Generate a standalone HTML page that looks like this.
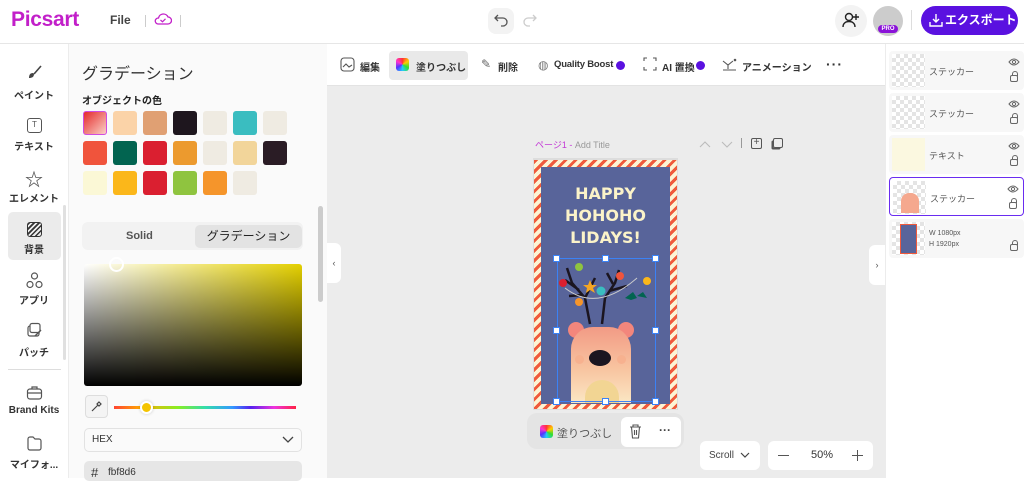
<!DOCTYPE html>
<html><head><meta charset="utf-8"><style>
*{box-sizing:border-box;margin:0;padding:0}
body{width:1024px;height:478px;overflow:hidden;background:#fff;font-family:"Liberation Sans","Noto Sans CJK JP",sans-serif;color:#222;position:relative}
.a{position:absolute}
.sw{position:absolute;width:24px;height:24px;border-radius:3px}
.rl{position:absolute;left:0;width:68px;text-align:center;font-size:10px;font-weight:bold;color:#333}
.ti{position:absolute;top:59px;font-size:10px;font-weight:bold;color:#333;white-space:nowrap}
.ly{position:absolute;left:889px;width:135px;height:39px;background:#f7f7f7;border-radius:4px}
.ck{position:absolute;left:3px;top:3px;width:33px;height:33px;background-color:#fff;background-image:linear-gradient(45deg,#e4e4e4 25%,transparent 25%,transparent 75%,#e4e4e4 75%),linear-gradient(45deg,#e4e4e4 25%,transparent 25%,transparent 75%,#e4e4e4 75%);background-size:8px 8px;background-position:0 0,4px 4px}
.lt{position:absolute;left:40px;top:14px;font-size:9px;color:#555}
.ey{position:absolute;right:4px;top:7px}
.lk{position:absolute;right:6px;top:24px;width:8px;height:7px;border:1.2px solid #666;border-radius:2px}
.lk:before{content:"";position:absolute;left:0.5px;top:-5px;width:4px;height:4px;border:1.2px solid #666;border-bottom:none;border-radius:3px 3px 0 0}
.hd{position:absolute;width:7px;height:7px;background:#fff;border:1.5px solid #3b82f6}
</style></head><body>
<div class="a" style="left:0;top:0;width:1024px;height:44px;border-bottom:1px solid #e6e6e6;background:#fff"></div>
<div class="a" style="left:11px;top:8px;font-size:21px;color:#c21fc9;font-weight:bold;letter-spacing:-0.3px">Picsart</div>
<div class="a" style="left:110px;top:13px;font-size:12px;color:#444;font-weight:bold">File</div>
<div class="a" style="left:145px;top:15px;width:1px;height:12px;background:#ccc"></div>
<svg class="a" style="left:154px;top:12px" width="18" height="14" viewBox="0 0 18 14"><path d="M4 12h10a3.5 3.5 0 0 0 0-7 5 5 0 0 0-9.5 1A3 3 0 0 0 4 12z" fill="none" stroke="#c21fc9" stroke-width="1.3"/><path d="M6.5 8l2 1.8 3-3" fill="none" stroke="#c21fc9" stroke-width="1.2"/></svg>
<div class="a" style="left:180px;top:15px;width:1px;height:12px;background:#ccc"></div>
<div class="a" style="left:488px;top:8px;width:26px;height:26px;border-radius:8px;background:#f3f3f3"></div>
<svg class="a" style="left:493px;top:13px" width="16" height="14" viewBox="0 0 16 14"><path d="M5 2L2 5l3 3M2 5h8a4 4 0 0 1 0 8H8" fill="none" stroke="#555" stroke-width="1.3"/></svg>
<svg class="a" style="left:522px;top:13px" width="16" height="14" viewBox="0 0 16 14"><path d="M11 2l3 3-3 3M14 5H6a4 4 0 0 0 0 8h2" fill="none" stroke="#ccc" stroke-width="1.3"/></svg>
<div class="a" style="left:835px;top:5px;width:32px;height:32px;border-radius:50%;background:#f3f3f3"></div>
<svg class="a" style="left:841px;top:11px" width="20" height="18" viewBox="0 0 20 18"><circle cx="8" cy="6" r="3.5" fill="none" stroke="#222" stroke-width="1.4"/><path d="M2 16c0-4 3-5.5 6-5.5s6 1.5 6 5.5" fill="none" stroke="#222" stroke-width="1.4"/><path d="M15 3v6M12 6h6" stroke="#222" stroke-width="1.4"/></svg>
<div class="a" style="left:873px;top:6px;width:30px;height:30px;border-radius:50%;background:#ccc"></div>
<div class="a" style="left:878px;top:25px;width:20px;height:8px;border-radius:4px;background:#8a12d8;color:#fff;font-size:6px;text-align:center;line-height:8px;font-weight:bold">PRO</div>
<div class="a" style="left:911px;top:10px;width:1px;height:20px;background:#ddd"></div>
<div class="a" style="left:921px;top:6px;width:97px;height:29px;border-radius:15px;background:#5a11e0;color:#fff;font-size:12px;font-weight:bold;line-height:29px;padding-left:24px">エクスポート</div>
<svg class="a" style="left:929px;top:13px" width="14" height="14" viewBox="0 0 14 14"><path d="M7 1v8M4 6l3 3 3-3M1 9v4h12V9" fill="none" stroke="#fff" stroke-width="1.4"/></svg>
<div class="a" style="left:68px;top:44px;width:1px;height:434px;background:#ececec"></div>
<div class="a" style="left:63px;top:205px;width:3px;height:155px;background:#e0e0e0;border-radius:2px"></div>
<svg class="a" style="left:26px;top:64px" width="17" height="17" viewBox="0 0 17 17"><path d="M15 2L8 10" stroke="#444" stroke-width="1.6"/><path d="M7 9c-3 0-4 2-4 5 3 0 5-1 5-4z" fill="#444"/></svg>
<div class="rl" style="top:87px">ペイント</div>
<div class="a" style="left:27px;top:118px;width:15px;height:15px;border:1.3px solid #555;border-radius:3px;font-size:8px;text-align:center;line-height:12px;color:#555">T</div>
<div class="rl" style="top:138px">テキスト</div>
<div class="rl" style="top:166px;font-size:18px;color:#555">☆</div>
<div class="rl" style="top:190px">エレメント</div>
<div class="a" style="left:8px;top:212px;width:53px;height:48px;background:#ebebeb;border-radius:5px"></div>
<div class="a" style="left:27px;top:222px;width:15px;height:15px;border:1.5px solid #333;border-radius:3px;background:repeating-linear-gradient(135deg,#333 0 1.5px,transparent 1.5px 3.5px)"></div>
<div class="rl" style="top:241px">背景</div>
<svg class="a" style="left:26px;top:272px" width="17" height="17" viewBox="0 0 17 17"><circle cx="8.5" cy="4" r="3" fill="none" stroke="#555" stroke-width="1.2"/><circle cx="4" cy="12.5" r="3" fill="none" stroke="#555" stroke-width="1.2"/><circle cx="13" cy="12.5" r="3" fill="none" stroke="#555" stroke-width="1.2"/></svg>
<div class="rl" style="top:292px">アプリ</div>
<svg class="a" style="left:26px;top:322px" width="17" height="17" viewBox="0 0 17 17"><rect x="2" y="4" width="11" height="10" rx="2" fill="none" stroke="#555" stroke-width="1.2"/><rect x="4" y="1.5" width="10" height="9" rx="2" fill="#fff" stroke="#555" stroke-width="1.2"/><path d="M9 14l6-6" stroke="#555" stroke-width="1.4"/></svg>
<div class="rl" style="top:344px">パッチ</div>
<div class="a" style="left:8px;top:369px;width:53px;height:1px;background:#ddd"></div>
<svg class="a" style="left:26px;top:385px" width="17" height="15" viewBox="0 0 17 15"><rect x="1.5" y="4" width="14" height="10" rx="2.5" fill="none" stroke="#555" stroke-width="1.2"/><path d="M6 4V2h5v2M1.5 8h14" fill="none" stroke="#555" stroke-width="1.2"/></svg>
<div class="rl" style="top:405px">Brand Kits</div>
<svg class="a" style="left:26px;top:435px" width="17" height="16" viewBox="0 0 17 16"><path d="M2 4a2 2 0 0 1 2-2h3l2 2h4a2 2 0 0 1 2 2v7a2 2 0 0 1-2 2H4a2 2 0 0 1-2-2z" fill="none" stroke="#555" stroke-width="1.2"/></svg>
<div class="rl" style="top:456px">マイフォ...</div>
<div class="a" style="left:69px;top:44px;width:258px;height:434px;background:#fafafa"></div>
<div class="a" style="left:82px;top:60px;font-size:16px;color:#333">グラデーション</div>
<div class="a" style="left:82px;top:92px;font-size:10px;font-weight:bold;color:#222">オブジェクトの色</div>
<div class="sw" style="left:83px;top:111px;background:linear-gradient(135deg,#e42b2b,#fbd1c7);border:1.5px solid #d04be0"></div>
<div class="sw" style="left:113px;top:111px;background:#fbd3a8"></div>
<div class="sw" style="left:143px;top:111px;background:#e0a073"></div>
<div class="sw" style="left:173px;top:111px;background:#1e161e"></div>
<div class="sw" style="left:203px;top:111px;background:#efebe2"></div>
<div class="sw" style="left:233px;top:111px;background:#3abdc0"></div>
<div class="sw" style="left:263px;top:111px;background:#efebe2"></div>
<div class="sw" style="left:83px;top:141px;background:#f0543c"></div>
<div class="sw" style="left:113px;top:141px;background:#026450"></div>
<div class="sw" style="left:143px;top:141px;background:#da1f30"></div>
<div class="sw" style="left:173px;top:141px;background:#ec9a2e"></div>
<div class="sw" style="left:203px;top:141px;background:#efebe2"></div>
<div class="sw" style="left:233px;top:141px;background:#f2d59a"></div>
<div class="sw" style="left:263px;top:141px;background:#2a1c25"></div>
<div class="sw" style="left:83px;top:171px;background:#fbf8d6"></div>
<div class="sw" style="left:113px;top:171px;background:#fbb71a"></div>
<div class="sw" style="left:143px;top:171px;background:#da1f30"></div>
<div class="sw" style="left:173px;top:171px;background:#8fc43f"></div>
<div class="sw" style="left:203px;top:171px;background:#f5952b"></div>
<div class="sw" style="left:233px;top:171px;background:#efebe2"></div>
<div class="a" style="left:318px;top:206px;width:5px;height:96px;background:#ccc;border-radius:3px"></div>
<div class="a" style="left:82px;top:222px;width:221px;height:28px;background:#f2f2f2;border-radius:6px"></div>
<div class="a" style="left:126px;top:230px;font-size:11px;font-weight:bold;color:#555">Solid</div>
<div class="a" style="left:195px;top:225px;width:107px;height:23px;background:#e3e3e3;border-radius:5px;font-size:12px;text-align:center;line-height:23px;color:#222">グラデーション</div>
<div class="a" style="left:84px;top:264px;width:218px;height:122px;border-radius:3px;background:linear-gradient(to bottom,transparent,#000),linear-gradient(to right,#fff,#e4d000)"></div>
<div class="a" style="left:109px;top:257px;width:15px;height:15px;border:2px solid #fff;border-radius:50%"></div>
<div class="a" style="left:85px;top:395px;width:23px;height:23px;border:1px solid #ddd;border-radius:4px;background:#f4f4f4"></div>
<svg class="a" style="left:90px;top:400px" width="13" height="13" viewBox="0 0 13 13"><path d="M2 11l6-6M7 4l2 2M9 2l2 2-2 2-2-2z" fill="none" stroke="#444" stroke-width="1.2"/></svg>
<div class="a" style="left:114px;top:406px;width:182px;height:3px;background:linear-gradient(to right,#f43 0%,#fa0 15%,#8e2 35%,#3da 50%,#39f 65%,#52e 75%,#e3d 88%,#f24 100%)"></div>
<div class="a" style="left:140px;top:401px;width:13px;height:13px;border-radius:50%;background:#f4c400;border:2px solid #fff;box-shadow:0 0 3px rgba(0,0,0,.2)"></div>
<div class="a" style="left:84px;top:428px;width:218px;height:24px;border:1px solid #e2e2e2;border-radius:5px;background:#fafafa"></div>
<div class="a" style="left:92px;top:434px;font-size:10px;color:#333">HEX</div>
<svg class="a" style="left:282px;top:436px" width="12" height="8" viewBox="0 0 12 8"><path d="M1 1l5 5 5-5" fill="none" stroke="#444" stroke-width="1.3"/></svg>
<div class="a" style="left:84px;top:461px;width:218px;height:20px;border-radius:5px;background:#e6e6e6"></div>
<div class="a" style="left:91px;top:465px;font-size:13px;color:#333">#</div>
<div class="a" style="left:108px;top:467px;font-size:10px;color:#333">fbf8d6</div>
<div class="a" style="left:327px;top:44px;width:558px;height:434px;background:#ececec"></div>
<div class="a" style="left:327px;top:44px;width:558px;height:42px;background:#fff;border-bottom:1px solid #e3e3e3"></div>
<svg class="a" style="left:340px;top:57px" width="15" height="15" viewBox="0 0 15 15"><rect x="1" y="1" width="13" height="13" rx="3" fill="none" stroke="#555" stroke-width="1.1"/><path d="M3 10l3-3 3 3 3-2" fill="none" stroke="#555" stroke-width="1.1"/></svg>
<div class="ti" style="left:360px">編集</div>
<div class="a" style="left:389px;top:51px;width:79px;height:29px;background:#e9e9e9;border-radius:4px"></div>
<div class="a" style="left:396px;top:58px;width:13px;height:13px;border-radius:3px;background:conic-gradient(#f33,#fc0,#3d3,#2cf,#53f,#f3c,#f33)"></div>
<div class="ti" style="left:416px">塗りつぶし</div>
<div class="a" style="left:481px;top:57px;font-size:12px;color:#666">✎</div>
<div class="ti" style="left:498px">削除</div>
<div class="a" style="left:538px;top:58px;font-size:12px;color:#777">◍</div>
<div class="ti" style="left:554px;font-size:9.5px;letter-spacing:-0.2px">Quality Boost</div>
<div class="a" style="left:616px;top:61px;width:9px;height:9px;border-radius:50%;background:#5a11e0"></div>
<svg class="a" style="left:643px;top:57px" width="14" height="14" viewBox="0 0 14 14"><path d="M1 4V1h3M10 1h3v3M13 10v3h-3M4 13H1v-3" fill="none" stroke="#555" stroke-width="1.1"/></svg>
<div class="ti" style="left:662px">AI 置換</div>
<div class="a" style="left:696px;top:61px;width:9px;height:9px;border-radius:50%;background:#5a11e0"></div>
<svg class="a" style="left:722px;top:58px" width="15" height="13" viewBox="0 0 15 13"><path d="M1 3l5 4 5-4M6 7v4M1 12h13" fill="none" stroke="#555" stroke-width="1.1"/><circle cx="13" cy="2" r="1.3" fill="#555"/></svg>
<div class="ti" style="left:742px">アニメーション</div>
<div class="a" style="left:826px;top:56px;font-size:14px;font-weight:bold;color:#333;letter-spacing:1px">···</div>
<div class="a" style="left:327px;top:243px;width:14px;height:40px;background:#fff;border-radius:0 6px 6px 0;font-size:9px;color:#555;line-height:40px;text-align:center">‹</div>
<div class="a" style="left:869px;top:245px;width:16px;height:40px;background:#fff;border-radius:6px 0 0 6px;font-size:9px;color:#555;line-height:40px;text-align:center">›</div>
<div class="a" style="left:535px;top:138px;font-size:9px;color:#c33bd6">ページ1 - <span style="color:#999">Add Title</span></div>
<svg class="a" style="left:699px;top:139px" width="34" height="10" viewBox="0 0 34 10"><path d="M1 8l5-5 5 5M23 3l5 5 5-5" fill="none" stroke="#bbb" stroke-width="1.1"/></svg>
<div class="a" style="left:741px;top:138px;width:1px;height:10px;background:#999"></div>
<div class="a" style="left:751px;top:138px;width:11px;height:11px;border:1.2px solid #555;border-radius:2px;font-size:10px;line-height:8px;text-align:center;color:#555">+</div>
<div class="a" style="left:773px;top:138px;width:10px;height:10px;border:1.2px solid #555;border-radius:2px;box-shadow:-2px 2px 0 -0.5px #555"></div>
<div class="a" style="left:533px;top:158px;width:145px;height:252px;background:#ddd"></div>
<div class="a" style="left:534px;top:160px;width:143px;height:249px;background:repeating-linear-gradient(135deg,#ef5a3c 0 3px,#fdf4d4 3px 7px)"></div>
<div class="a" style="left:541px;top:167px;width:129px;height:237px;background:#58649a"></div>
<div class="a" style="left:541px;top:183px;width:129px;text-align:center;font-size:16px;font-weight:bold;color:#fbf3c9;line-height:22px;font-family:'DejaVu Sans',sans-serif">HAPPY<br>HOHOHO<br>LIDAYS!</div>
<div class="a" style="left:568px;top:322px;width:16px;height:16px;border-radius:50%;background:#f3867c"></div>
<div class="a" style="left:618px;top:322px;width:16px;height:16px;border-radius:50%;background:#f3867c"></div>
<div class="a" style="left:571px;top:327px;width:60px;height:76px;border-radius:22px 22px 0 0;background:linear-gradient(#f29a85,#f8c4a0 55%,#fbe7c4)"></div>
<div class="a" style="left:585px;top:380px;width:34px;height:23px;border-radius:17px 17px 0 0;background:#f2d593"></div>
<div class="a" style="left:589px;top:350px;width:22px;height:16px;border-radius:50%;background:#1b1520"></div>
<div class="a" style="left:575px;top:355px;width:9px;height:9px;border-radius:50%;background:#f7b18f"></div>
<div class="a" style="left:617px;top:355px;width:9px;height:9px;border-radius:50%;background:#f7b18f"></div>
<svg class="a" style="left:557px;top:258px" width="100" height="70" viewBox="0 0 100 70"><g stroke="#1b1520" stroke-width="2.5" fill="none"><path d="M33 66L28 40 15 25 10 10M22 32L8 22M26 37L12 38M28 40L38 20"/><path d="M45 66L48 40 58 25 62 12M52 33L70 28M56 26L50 15"/></g><path d="M8 30Q40 55 80 20" stroke="#ccc" fill="none"/><circle cx="22" cy="9" r="4" fill="#8fc43f"/><circle cx="6" cy="25" r="4" fill="#da1f30"/><circle cx="22" cy="44" r="4" fill="#f5952b"/><circle cx="44" cy="33" r="4.5" fill="#3abdc0"/><circle cx="63" cy="18" r="4" fill="#f0543c"/><circle cx="90" cy="23" r="4" fill="#fbb71a"/><path d="M33 22l2 5 5 0-4 3 2 5-5-3-4 3 1-5-4-3 5 0z" fill="#f5a623"/><path d="M68 40l8-6 4 6-6 2z M80 38l6-4 4 6z" fill="#026450"/></svg>
<div class="a" style="left:557px;top:258px;width:99px;height:144px;border:1.5px solid #3b82f6"></div>
<div class="hd" style="left:553px;top:255px"></div><div class="hd" style="left:602px;top:255px"></div><div class="hd" style="left:652px;top:255px"></div>
<div class="hd" style="left:553px;top:327px"></div><div class="hd" style="left:652px;top:327px"></div>
<div class="hd" style="left:553px;top:398px"></div><div class="hd" style="left:602px;top:398px"></div><div class="hd" style="left:652px;top:398px"></div>
<div class="a" style="left:527px;top:413px;width:157px;height:36px;background:#e4e4e4;border-radius:10px"></div>
<div class="a" style="left:540px;top:425px;width:13px;height:13px;border-radius:3px;background:conic-gradient(#f33,#fc0,#3d3,#2cf,#53f,#f3c,#f33)"></div>
<div class="a" style="left:557px;top:425px;font-size:11px;color:#555">塗りつぶし</div>
<div class="a" style="left:621px;top:417px;width:60px;height:30px;background:#fff;border-radius:6px"></div>
<svg class="a" style="left:629px;top:424px" width="13" height="15" viewBox="0 0 13 15"><path d="M1 3h11M4 3V1h5v2M2.5 3l1 11h6l1-11M5.5 6v5M7.5 6v5" fill="none" stroke="#555" stroke-width="1.1"/></svg>
<div class="a" style="left:659px;top:423px;font-size:12px;font-weight:bold;color:#444">···</div>
<div class="a" style="left:700px;top:441px;width:60px;height:29px;background:#fff;border-radius:6px;font-size:10px;color:#444;line-height:29px;padding-left:9px">Scroll</div>
<svg class="a" style="left:740px;top:452px" width="10" height="7" viewBox="0 0 10 7"><path d="M1 1l4 4 4-4" fill="none" stroke="#444" stroke-width="1.2"/></svg>
<div class="a" style="left:768px;top:441px;width:105px;height:29px;background:#fff;border-radius:6px"></div>
<div class="a" style="left:778px;top:455px;width:11px;height:1.3px;background:#555"></div>
<div class="a" style="left:811px;top:449px;font-size:11px;color:#333">50%</div>
<div class="a" style="left:852px;top:455px;width:11px;height:1.3px;background:#555"></div>
<div class="a" style="left:857px;top:450px;width:1.3px;height:11px;background:#555"></div>
<div class="a" style="left:885px;top:44px;width:1px;height:434px;background:#ececec"></div>
<div class="ly" style="top:51px"><div class="ck"></div><div class="lt">ステッカー</div><svg class="ey" width="12" height="8" viewBox="0 0 12 8"><path d="M1 4Q6-2 11 4Q6 10 1 4z" fill="none" stroke="#666" stroke-width="1"/><circle cx="6" cy="4" r="1.6" fill="none" stroke="#666"/></svg><div class="lk"></div></div>
<div class="ly" style="top:93px"><div class="ck"></div><div class="lt">ステッカー</div><svg class="ey" width="12" height="8" viewBox="0 0 12 8"><path d="M1 4Q6-2 11 4Q6 10 1 4z" fill="none" stroke="#666" stroke-width="1"/><circle cx="6" cy="4" r="1.6" fill="none" stroke="#666"/></svg><div class="lk"></div></div>
<div class="ly" style="top:135px"><div class="ck" style="background:#fbf8e0"></div><div class="lt">テキスト</div><svg class="ey" width="12" height="8" viewBox="0 0 12 8"><path d="M1 4Q6-2 11 4Q6 10 1 4z" fill="none" stroke="#666" stroke-width="1"/><circle cx="6" cy="4" r="1.6" fill="none" stroke="#666"/></svg><div class="lk"></div></div>
<div class="ly" style="top:177px;border:1.5px solid #6a2cf0;background:#fff"><div class="ck"><div class="a" style="left:8px;top:12px;width:18px;height:20px;border-radius:8px 8px 0 0;background:#f5a88e"></div></div><div class="lt">ステッカー</div><svg class="ey" width="12" height="8" viewBox="0 0 12 8"><path d="M1 4Q6-2 11 4Q6 10 1 4z" fill="none" stroke="#666" stroke-width="1"/><circle cx="6" cy="4" r="1.6" fill="none" stroke="#666"/></svg><div class="lk"></div></div>
<div class="ly" style="top:219px"><div class="ck"><div class="a" style="left:8px;top:2px;width:17px;height:30px;background:#58649a;border:1px solid #ef5a3c"></div></div><div class="lt" style="top:9px;font-size:7px;line-height:11px">W 1080px<br>H 1920px</div><div class="lk" style="top:25px"></div></div>
</body></html>
